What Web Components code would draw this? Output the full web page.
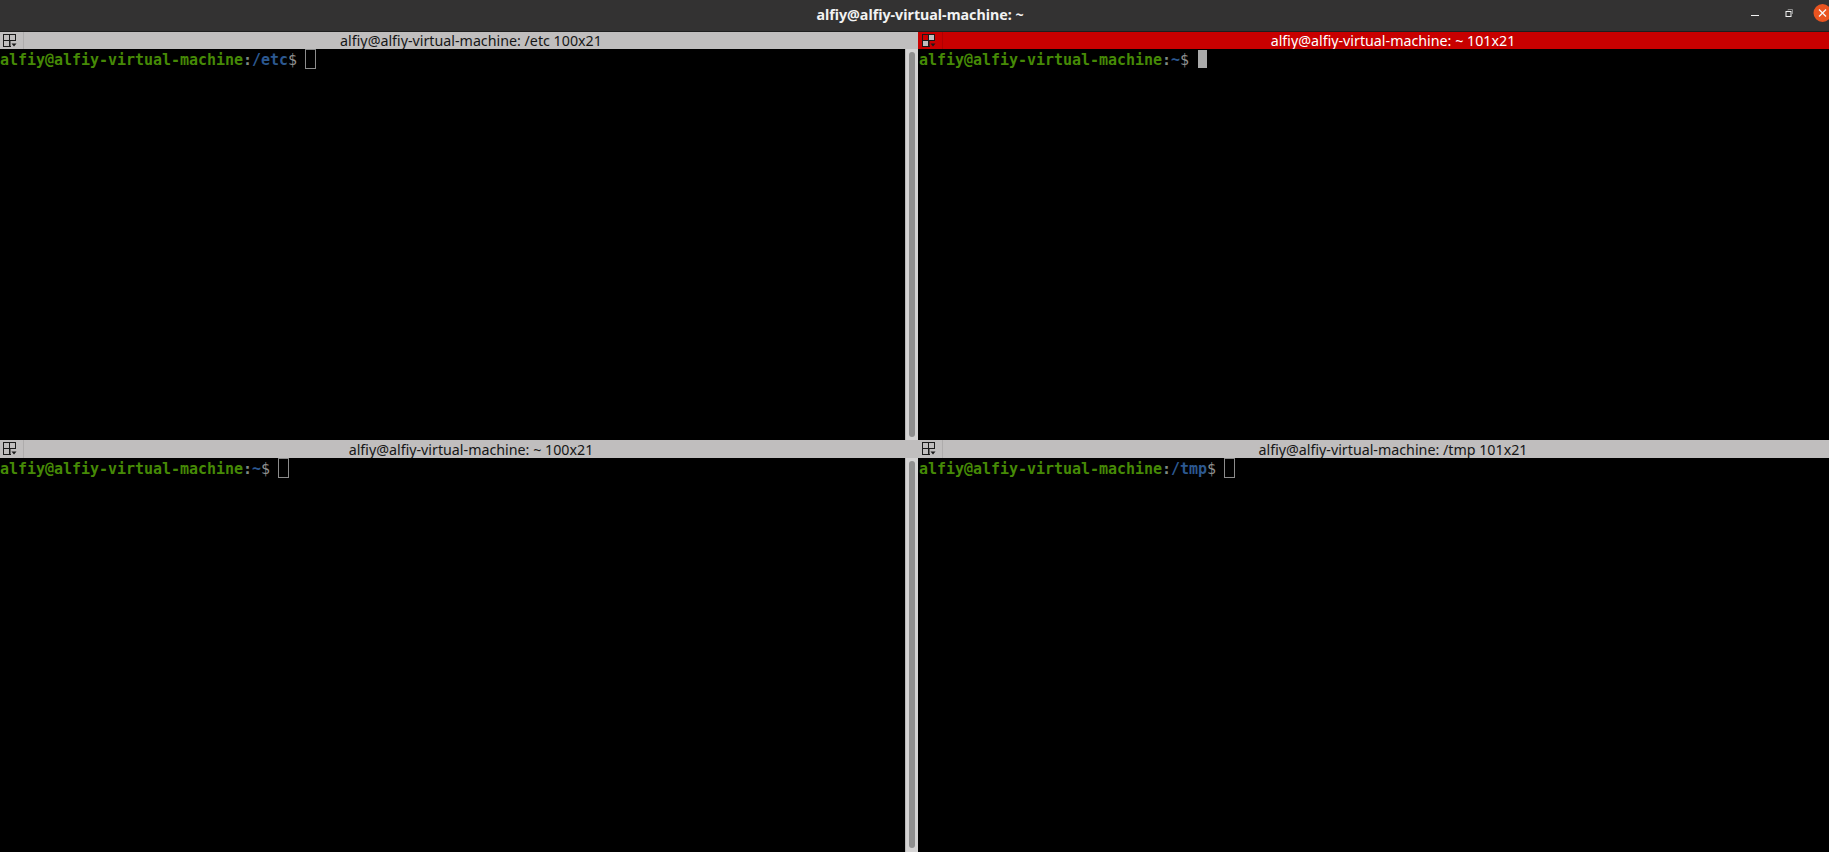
<!DOCTYPE html>
<html>
<head>
<meta charset="utf-8">
<title>alfiy@alfiy-virtual-machine: ~</title>
<style>
    html, body { margin: 0; height: 100%; background: #000; overflow: hidden; }
    body { display: flex; flex-direction: column; height: 852px; font-family: "Noto Sans", sans-serif; }
    .grid {
        flex: 1;
        display: grid;
        grid-template-columns: 918px 911px;
        grid-template-rows: 408px 412px;
    }
</style>
</head>
<body>
<window-header>alfiy@alfiy-virtual-machine: ~</window-header>
<div class="grid">
    <term-pane title-text="alfiy@alfiy-virtual-machine: /etc 100x21" path="/etc" bar-height="17" scrollbar thumb-top="3" thumb-height="385"></term-pane>
    <term-pane title-text="alfiy@alfiy-virtual-machine: ~ 101x21" path="~" bar-height="17" active></term-pane>
    <term-pane title-text="alfiy@alfiy-virtual-machine: ~ 100x21" path="~" bar-height="18" scrollbar thumb-top="3" thumb-height="387"></term-pane>
    <term-pane title-text="alfiy@alfiy-virtual-machine: /tmp 101x21" path="/tmp" bar-height="18"></term-pane>
</div>

<script>
class WindowHeader extends HTMLElement {
    constructor() {
        super();
        this.attachShadow({ mode: "open" });
        this.shadowRoot.innerHTML = `
            <style>
                :host {
                    display: flex;
                    flex: none;
                    height: 31px;
                    border-bottom: 1px solid #1e1e1e;
                    background-color: #333232;
                    color: #f2f2f2;
                    font: bold 14.25px "Noto Sans", sans-serif;
                    align-items: center;
                    justify-content: center;
                    position: relative;
                    padding-left: 11px;
                }
                .title { margin-top: -3px; }
                .controls {
                    position: absolute;
                    right: 0;
                    top: 4px;
                    display: flex;
                    align-items: center;
                }
                .controls svg { display: block; }
            </style>
            <span class="title"><slot></slot></span>
            <div class="controls">
                <svg width="129" height="20" viewBox="0 0 129 20">
                    <path d="M51 11.5h8" stroke="#f2f2f2" stroke-width="1"/>
                    <rect x="86" y="7.5" width="5" height="5" fill="none" stroke="#f2f2f2" stroke-width="1"/>
                    <path d="M88 6.5V5.5h4.5V10" fill="none" stroke="#8b8b8b" stroke-width="1"/>
                    <circle cx="122.5" cy="9" r="9" fill="#e95420"/>
                    <path d="M119 5.5l7 7M126 5.5l-7 7" stroke="#f7f7f7" stroke-width="1.3"/>
                </svg>
            </div>
        `;
    }
}

class TermPane extends HTMLElement {
    constructor() {
        super();
        this.attachShadow({ mode: "open" });
        const active = this.hasAttribute("active");
        const path = this.getAttribute("path");
        const titleText = this.getAttribute("title-text");
        const hasBar = this.hasAttribute("scrollbar");
        const barHeight = this.getAttribute("bar-height") || 18;
        const thumbTop = this.getAttribute("thumb-top") || 0;
        const thumbHeight = this.getAttribute("thumb-height") || 0;
        const cellA = active ? "#c80000" : "none";
        const cellB = active ? "#c0bebe" : "none";
        this.shadowRoot.innerHTML = `
            <style>
                :host {
                    display: flex;
                    flex-direction: column;
                    min-width: 0;
                    min-height: 0;
                }
                .bar {
                    display: flex;
                    flex: none;
                    height: ${barHeight}px;
                    background-color: ${active ? "#c80000" : "#c0bebe"};
                    color: ${active ? "#ffffff" : "#161616"};
                    font: 14.25px "Noto Sans", sans-serif;
                    align-items: center;
                }
                .icon {
                    flex: none;
                    width: ${hasBar ? 24 : 25}px;
                    height: 100%;
                    box-sizing: border-box;
                    border-right: 1px solid ${active ? "#b00000" : "#aeacac"};
                    padding: 2px 0 0 ${hasBar ? 3 : 4}px;
                }
                .icon svg { display: block; }
                .label {
                    flex: 1;
                    text-align: center;
                    white-space: nowrap;
                    padding-left: ${hasBar ? 0 : 14}px;
                }
                .body { flex: 1; display: flex; min-height: 0; }
                .screen {
                    flex: 1;
                    background: #000;
                    padding: 2px 0 0 ${hasBar ? 0 : 1}px;
                    font: bold 15px/18px "DejaVu Sans Mono", monospace;
                    letter-spacing: -0.03px;
                    color: #468a06;
                    white-space: pre;
                }
                .path { color: #2c5890; }
                .colon { color: #7f8a86; }
                .dollar { color: #8f8f8f; font-weight: normal; }
                .cursor {
                    display: inline-block;
                    width: 9px;
                    height: 18px;
                    margin-top: -1px;
                    vertical-align: top;
                    ${active ? "background: #aaaaaa;" : "outline: 1px solid #8c8c8c;"}
                }
                .scrollbar {
                    flex: none;
                    width: 13px;
                    box-sizing: border-box;
                    background: #d4d3d3;
                    padding: ${thumbTop}px 3px 0 3px;
                    border-left: 1px solid #b9b8b8;
                }
                .thumb {
                    width: 6px;
                    height: ${thumbHeight}px;
                    background: #8f8f8f;
                    border-radius: 3px;
                }
            </style>
            <div class="bar">
                <div class="icon">
                    <svg width="14" height="14" viewBox="0 0 14 14">
                        <rect x="0.5" y="0.5" width="6" height="6" fill="${cellA}" stroke="#1a1a1a"/>
                        <rect x="6.5" y="0.5" width="6" height="6" fill="${cellB}" stroke="#1a1a1a"/>
                        <rect x="0.5" y="6.5" width="6" height="6" fill="${cellB}" stroke="#1a1a1a"/>
                        <path d="M7 6.5v6M7 6.5h6M7 12.5h1" fill="none" stroke="#1a1a1a"/>
                        <path d="M8.5 9.5h5l-2.5 3z" fill="#1a1a1a"/>
                    </svg>
                </div>
                <div class="label">${titleText}</div>
            </div>
            <div class="body">
                <div class="screen">alfiy@alfiy-virtual-machine<span class="colon">:</span><span class="path">${path}</span><span class="dollar">$</span> <span class="cursor"></span></div>
                ${hasBar ? `<div class="scrollbar"><div class="thumb"></div></div>` : ""}
            </div>
        `;
    }
}

customElements.define("window-header", WindowHeader);
customElements.define("term-pane", TermPane);
</script>
</body>
</html>
